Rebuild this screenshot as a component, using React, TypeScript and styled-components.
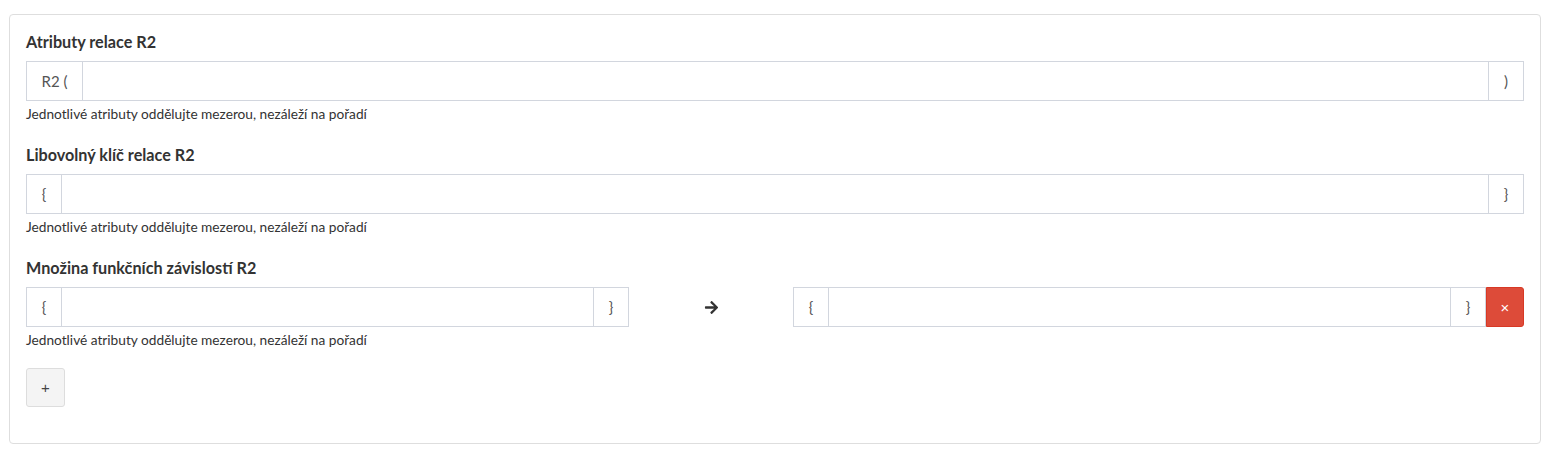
import styled, { createGlobalStyle } from "styled-components";
import { FaArrowRight } from "react-icons/fa";

const GlobalStyle = createGlobalStyle`
  body {
    margin: 0;
    background: #fff;
    font-family: "Source Sans Pro", Lato, "Liberation Sans", sans-serif;
    color: #333;
  }
  * { box-sizing: border-box; }
`;

const Page = styled.div`
  padding: 14px 9px;
`;

const Panel = styled.div`
  border: 1px solid #dedede;
  border-radius: 4px;
  padding: 17px 16px 16px;
`;

const Group = styled.div`
  margin-bottom: 22px;
`;

const Label = styled.label`
  display: block;
  font-size: 16.2px;
  font-weight: 700;
  line-height: 20px;
  margin-bottom: 9px;
  color: #333;
`;

const InputGroup = styled.div`
  display: flex;
  height: 40px;
`;

const Addon = styled.span<{ $width: number; $side: "left" | "right" }>`
  flex: 0 0 ${(p) => p.$width}px;
  display: flex;
  align-items: center;
  justify-content: center;
  border: 1px solid #d2d6de;
  ${(p) => (p.$side === "left" ? "border-right: 0;" : "border-left: 0;")}
  font-size: 15px;
  color: #555;
  background: #fff;
`;

const Field = styled.input`
  flex: 1;
  min-width: 0;
  border: 1px solid #d2d6de;
  height: 40px;
  padding: 6px 12px;
  font: inherit;
  font-size: 14px;
  outline: none;
`;

const Help = styled.div`
  margin-top: 4px;
  font-size: 13.7px;
  line-height: 18px;
  color: #333;
`;

const DepRow = styled.div`
  display: grid;
  grid-template-columns: 603fr 164fr 731fr;
  align-items: center;
`;

const ArrowCell = styled.div`
  display: flex;
  justify-content: center;
  color: #333;
`;

const RemoveButton = styled.button`
  flex: 0 0 38px;
  border: 1px solid #d73925;
  background: #dd4b39;
  color: #fff;
  font-size: 15px;
  border-radius: 0 3px 3px 0;
  padding: 0;
  cursor: pointer;
`;

const AddButton = styled.button`
  display: block;
  width: 39px;
  height: 39px;
  border: 1px solid #ddd;
  border-radius: 3px;
  background: #f4f4f4;
  color: #444;
  font-size: 15px;
  padding: 0;
  margin: -3px 0 20px;
  cursor: pointer;
`;

const HELP = "Jednotlivé atributy oddělujte mezerou, nezáleží na pořadí";

export default function App() {
  return (
    <Page>
      <GlobalStyle />
      <Panel>
        <Group>
          <Label>Atributy relace R2</Label>
          <InputGroup>
            <Addon $width={56} $side="left">R2 (</Addon>
            <Field />
            <Addon $width={35} $side="right">)</Addon>
          </InputGroup>
          <Help>{HELP}</Help>
        </Group>

        <Group>
          <Label>Libovolný klíč relace R2</Label>
          <InputGroup>
            <Addon $width={35} $side="left">{"{"}</Addon>
            <Field />
            <Addon $width={35} $side="right">{"}"}</Addon>
          </InputGroup>
          <Help>{HELP}</Help>
        </Group>

        <Group>
          <Label>Množina funkčních závislostí R2</Label>
          <DepRow>
            <InputGroup>
              <Addon $width={35} $side="left">{"{"}</Addon>
              <Field />
              <Addon $width={35} $side="right">{"}"}</Addon>
            </InputGroup>
            <ArrowCell>
              <FaArrowRight size={15} />
            </ArrowCell>
            <InputGroup>
              <Addon $width={35} $side="left">{"{"}</Addon>
              <Field />
              <Addon $width={35} $side="right">{"}"}</Addon>
              <RemoveButton>×</RemoveButton>
            </InputGroup>
          </DepRow>
          <Help>{HELP}</Help>
        </Group>

        <AddButton>+</AddButton>
      </Panel>
    </Page>
  );
}
